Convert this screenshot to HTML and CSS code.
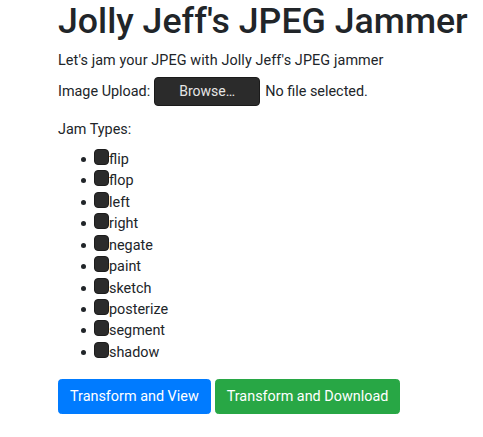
FILE: index.html
```
<!DOCTYPE html>
<html>
<head>
<meta charset="utf-8">
<link rel="stylesheet" href="styles.css">
</head>
<body>
<div class="page">
  <h1 class="title">Jolly Jeff's JPEG Jammer</h1>
  <p class="lead">Let's jam your JPEG with Jolly Jeff's JPEG jammer</p>
  <div class="upload">
    <span class="upload-label">Image Upload:</span>
    <span class="browse">Browse…</span>
    <span class="nofile">No file selected.</span>
  </div>
  <div class="jam-label">Jam Types:</div>
  <ul class="jam-list">
    <li><span class="box"></span>flip</li>
    <li><span class="box"></span>flop</li>
    <li><span class="box"></span>left</li>
    <li><span class="box"></span>right</li>
    <li><span class="box"></span>negate</li>
    <li><span class="box"></span>paint</li>
    <li><span class="box"></span>sketch</li>
    <li><span class="box"></span>posterize</li>
    <li><span class="box"></span>segment</li>
    <li><span class="box"></span>shadow</li>
  </ul>
  <div class="actions">
    <span class="btn btn-blue">Transform and View</span>
    <span class="btn btn-green">Transform and Download</span>
  </div>
</div>
</body>
</html>
```

FILE: styles.css
```
html, body {
  margin: 0;
  padding: 0;
  background: #ffffff;
}
body {
  font-family: Roboto, "Liberation Sans", sans-serif;
  font-size: 14.4px;
  line-height: 21.6px;
  color: #212529;
}
.page {
  padding: 0 0 0 58px;
}
.title {
  font-size: 35.7px;
  font-weight: 500;
  line-height: 43.2px;
  margin: 0 0 7.2px 0;
}
.lead {
  margin: 0;
  letter-spacing: 0.1px;
}
.upload {
  display: flex;
  align-items: center;
  margin-top: 5px;
  height: 29px;
}
.browse {
  display: inline-flex;
  align-items: center;
  justify-content: center;
  box-sizing: border-box;
  width: 106px;
  height: 29px;
  margin: 0 5px 0 4px;
  background: #2b2b2b;
  border: 1px solid #1a1a1a;
  border-radius: 4px;
  color: #e6e6e6;
  font-size: 14px;
}
.jam-label {
  margin-top: 13.5px;
}
.jam-list {
  list-style: none;
  margin: 8px 0 16px 0;
  padding-left: 36px;
}
.jam-list li {
  line-height: 21.4px;
}
.jam-list li::before {
  content: "";
  display: inline-block;
  width: 5px;
  height: 5px;
  border-radius: 50%;
  background: #212529;
  margin-left: -13px;
  margin-right: 8px;
  vertical-align: 2px;
}
.box {
  display: inline-block;
  box-sizing: border-box;
  width: 15px;
  height: 16px;
  background: #2b2b2b;
  border: 1px solid #1c1c1c;
  border-radius: 4px;
  vertical-align: -1px;
}
.actions {
  display: flex;
  gap: 4px;
}
.btn {
  display: inline-block;
  padding: 5.6px 11px;
  line-height: 21.6px;
  border: 1px solid transparent;
  border-radius: 3.6px;
  color: #ffffff;
}
.btn-blue {
  background: #007bff;
  border-color: #007bff;
}
.btn-green {
  background: #28a745;
  border-color: #28a745;
}
```
